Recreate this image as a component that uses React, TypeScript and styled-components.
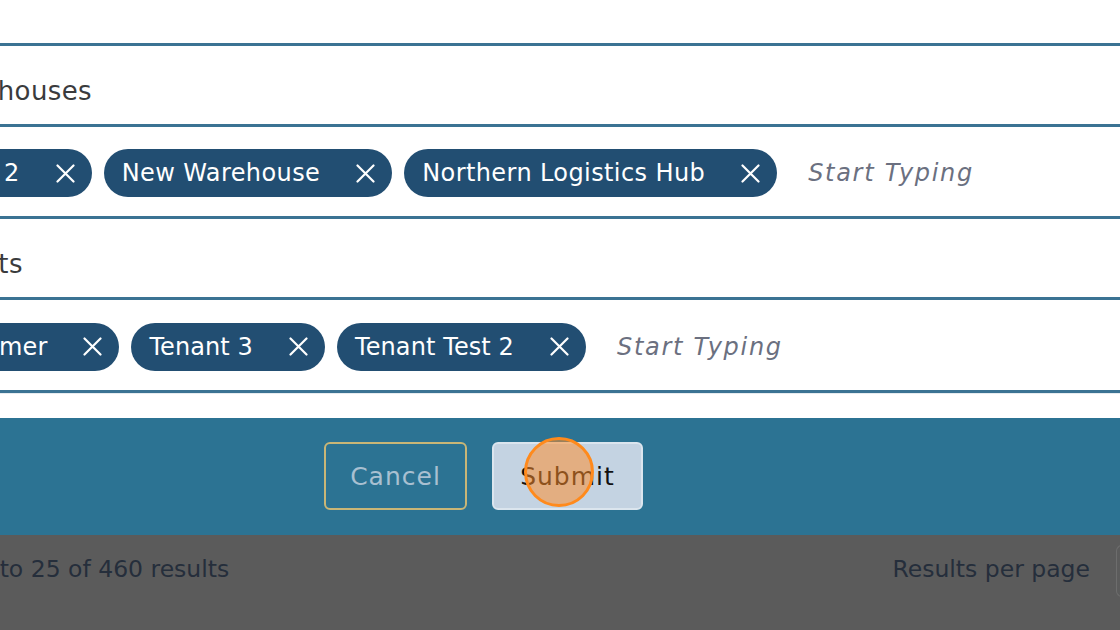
import React from "react";
import styled, { createGlobalStyle } from "styled-components";

const Global = createGlobalStyle`
  html, body { margin: 0; padding: 0; background: #ffffff; }
  body { font-family: "DejaVu Sans", "Noto Sans", sans-serif; overflow: hidden; }
  #root { width: 1120px; height: 630px; overflow: hidden; }
`;

const Page = styled.div`
  width: 1120px;
  height: 630px;
  display: flex;
  flex-direction: column;
  overflow: hidden;
`;

const Section = styled.div<{ $h: number }>`
  height: ${(p) => p.$h}px;
  box-sizing: border-box;
  flex: none;
  border-bottom: 3px solid #3b7393;
  display: flex;
  align-items: center;
  overflow: hidden;
  white-space: nowrap;
`;

const Heading = styled.div<{ $shift: number }>`
  margin-left: ${(p) => p.$shift}px;
  margin-top: 12px;
  font-size: 26px;
  letter-spacing: 0.4px;
  color: #3a3b3d;
`;

const ChipList = styled.div<{ $shift: number; $spacing: number }>`
  margin-left: ${(p) => p.$shift}px;
  margin-top: 3px;
  display: flex;
  align-items: center;
  gap: 12px;
  letter-spacing: ${(p) => p.$spacing}px;
`;

const Chip = styled.div`
  height: 48px;
  border-radius: 24px;
  background: #224e72;
  color: #ffffff;
  display: flex;
  align-items: center;
  padding: 0 17px 0 18px;
  font-size: 24px;
  flex: none;
`;

const ChipLabel = styled.span`
  margin-right: 36px;
`;

const Placeholder = styled.span`
  margin-left: 19px;
  font-size: 24px;
  font-style: italic;
  color: #6b7080;
  letter-spacing: 1.7px;
`;

const Spacer = styled.div`
  height: 25px;
  flex: none;
  border-top: 1px solid #e6ecf0;
  box-sizing: border-box;
`;

const Footer = styled.div`
  height: 117px;
  flex: none;
  background: #2c7393;
  display: flex;
  align-items: center;
  gap: 25px;
  padding-left: 324px;
  padding-bottom: 1px;
  box-sizing: border-box;
`;

const Button = styled.button<{ $primary?: boolean }>`
  position: relative;
  height: 68px;
  box-sizing: border-box;
  border-radius: 6px;
  font-family: "DejaVu Sans", sans-serif;
  font-size: 25px;
  letter-spacing: 1px;
  cursor: pointer;
  border: 2px solid ${(p) => (p.$primary ? "#dbe5ee" : "#c9b676")};
  background: ${(p) => (p.$primary ? "#c4d3e2" : "transparent")};
  color: ${(p) => (p.$primary ? "#111111" : "#a9c0d1")};
  width: ${(p) => (p.$primary ? 151 : 143)}px;
  padding: 0;
`;

const ClickMark = styled.span`
  position: absolute;
  left: 30px;
  top: -7px;
  width: 70px;
  height: 70px;
  box-sizing: border-box;
  border-radius: 50%;
  border: 3px solid #ff8a1c;
  background: rgba(255, 140, 40, 0.52);
  pointer-events: none;
`;

const Bottom = styled.div`
  flex: 1;
  background: #5b5b5b;
  display: flex;
  justify-content: space-between;
  align-items: flex-start;
  padding-top: 20px;
  box-sizing: border-box;
  white-space: nowrap;
  overflow: hidden;
`;

const BottomText = styled.span<{ $shift?: number }>`
  margin-left: ${(p) => p.$shift ?? 0}px;
  font-size: 23.5px;
  color: #252e3b;
`;

const RightGroup = styled.div`
  display: flex;
  align-items: flex-start;
  gap: 26px;
  margin-right: -26px;
`;

const SelectStub = styled.div`
  width: 30px;
  height: 52px;
  margin-top: -10px;
  border: 1px solid #6d6d6d;
  border-right: none;
  border-radius: 6px 0 0 6px;
  box-sizing: border-box;
`;

const XIcon = () => (
  <svg width="19" height="19" viewBox="0 0 19 19" fill="none">
    <path d="M1.5 1.5 L17.5 17.5 M17.5 1.5 L1.5 17.5" stroke="#ffffff" strokeWidth="2.2" strokeLinecap="round" />
  </svg>
);

const Tag = ({ label }: { label: string }) => (
  <Chip>
    <ChipLabel>{label}</ChipLabel>
    <XIcon />
  </Chip>
);

export default function App() {
  return (
    <Page>
      <Global />
      <Section $h={46} />
      <Section $h={81}>
        <Heading $shift={-70}>Warehouses</Heading>
      </Section>
      <Section $h={92}>
        <ChipList $shift={-159} $spacing={0.4}>
          <Tag label="Warehouse 2" />
          <Tag label="New Warehouse" />
          <Tag label="Northern Logistics Hub" />
          <Placeholder>Start Typing</Placeholder>
        </ChipList>
      </Section>
      <Section $h={81}>
        <Heading $shift={-80}>Tenants</Heading>
      </Section>
      <Section $h={93}>
        <ChipList $shift={-88} $spacing={0.1}>
          <Tag label="Customer" />
          <Tag label="Tenant 3" />
          <Tag label="Tenant Test 2" />
          <Placeholder>Start Typing</Placeholder>
        </ChipList>
      </Section>
      <Spacer />
      <Footer>
        <Button>Cancel</Button>
        <Button $primary>
          Submit
          <ClickMark />
        </Button>
      </Footer>
      <Bottom>
        <BottomText $shift={-130}>Showing 1 to 25 of 460 results</BottomText>
        <RightGroup>
          <BottomText>Results per page</BottomText>
          <SelectStub />
        </RightGroup>
      </Bottom>
    </Page>
  );
}
